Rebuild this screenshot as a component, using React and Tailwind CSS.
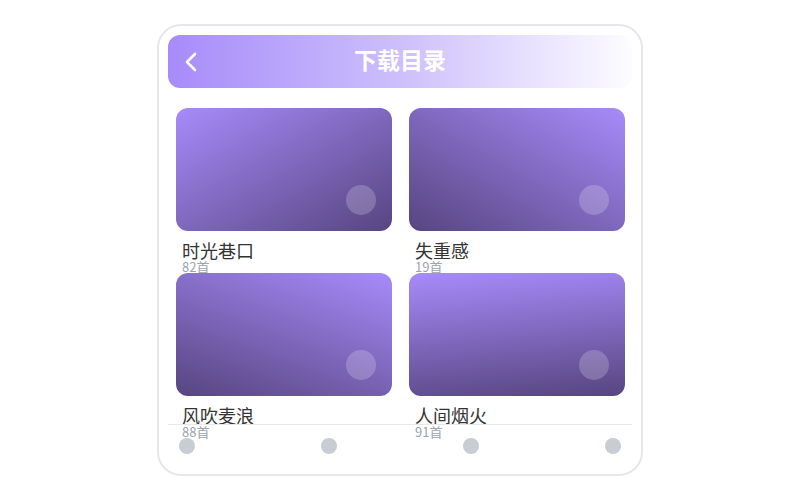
import React from "react";

const albums = [
  { id: 1, name: "时光巷口", count: 82, grad: "bg-[linear-gradient(to_bottom_right,#a78bfa,#574580)]" },
  { id: 2, name: "失重感", count: 19, grad: "bg-[linear-gradient(to_bottom_left,#a78bfa,#574580)]" },
  { id: 3, name: "风吹麦浪", count: 88, grad: "bg-[linear-gradient(200deg,#a78bfa,#574580)]" },
  { id: 4, name: "人间烟火", count: 91, grad: "bg-[linear-gradient(175deg,#a78bfa,#574580)]" },
];

const App = () => {
  return (
    <div className="w-[800px] h-[500px] bg-white pt-[24px] font-['Noto_Sans_CJK_SC','Noto_Sans',sans-serif]">
      <div className="mx-auto w-[486px] h-[452px] border-2 border-[#e6e7ea] rounded-[24px] bg-white p-[9px] flex flex-col">
        {/* header */}
        <div className="h-[53px] shrink-0 rounded-[12px] bg-gradient-to-r from-[#a78bfa] via-[#cdbffb] to-[#fdfcff] grid grid-cols-[60px_1fr_60px] items-center">
          <div className="pl-[16px] flex items-center">
            <svg width="14" height="20" viewBox="0 0 14 20" fill="none">
              <path d="M11 2 L3 10 L11 18" stroke="white" strokeWidth="2.6" strokeLinecap="round" strokeLinejoin="round" />
            </svg>
          </div>
          <h1 className="pb-[4px] text-center text-white text-[23px] font-bold leading-none">下载目录</h1>
          <div />
        </div>

        {/* grid */}
        <div className="flex-1 min-h-0 pt-[20px] pl-[8px] pr-[7px]">
          <div className="grid grid-cols-2 gap-x-[17px]">
            {albums.map((a) => (
              <div key={a.id} className="flex flex-col">
                <div className={`relative z-10 h-[123px] rounded-[12px] ${a.grad}`}>
                  <div className="absolute right-[16px] bottom-[16px] w-[30px] h-[30px] rounded-full bg-white/20" />
                </div>
                <div className="mt-[9px] pl-[6px] text-[18px] leading-[20px] text-[#333]">{a.name}</div>
                <div className="pl-[6px] text-[13px] leading-[13px] text-[#9ca3af]">{a.count}首</div>
              </div>
            ))}
          </div>
        </div>

        {/* bottom nav */}
        <div className="h-[41px] shrink-0 border-t border-[#e8e9ec] pt-[13px] px-[11px] flex justify-between items-start">
          <span className="w-4 h-4 rounded-full bg-[#c8ccd3]" />
          <span className="w-4 h-4 rounded-full bg-[#c8ccd3]" />
          <span className="w-4 h-4 rounded-full bg-[#c8ccd3]" />
          <span className="w-4 h-4 rounded-full bg-[#c8ccd3]" />
        </div>
      </div>
    </div>
  );
};

export default App;
